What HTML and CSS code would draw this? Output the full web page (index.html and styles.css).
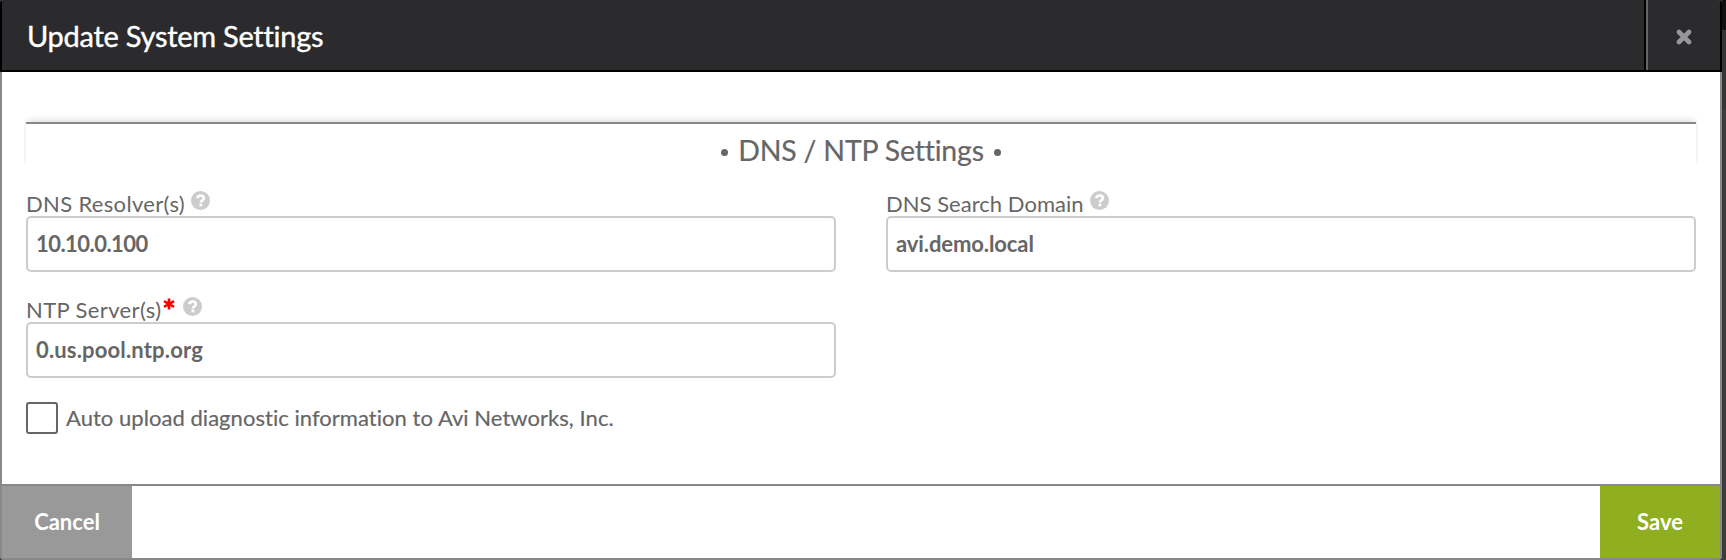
FILE: index.html
```html
<!DOCTYPE html>
<html lang="en">
<head>
<meta charset="utf-8">
<title>Update System Settings</title>
<link rel="stylesheet" href="styles.css">
</head>
<body>
<svg class="defs" width="0" height="0">
  <symbol id="help" viewBox="0 0 19 19">
    <circle cx="9.5" cy="9.5" r="9.5" fill="#ccc"/>
    <path d="M6.2 7.2C6.7 5.3 8 4.5 9.6 4.5c1.8 0 3.2 1.1 3.2 2.7 0 2.2-2.9 2.2-2.9 4.2" fill="none" stroke="#fff" stroke-width="2.7"/>
    <rect x="8.5" y="12.6" width="2.8" height="2.7" fill="#fff"/>
  </symbol>
</svg>
<div class="page">
  <div class="dialog">
    <header class="header">
      <h1 class="title">Update System Settings</h1>
      <button class="close" aria-label="Close">
        <svg width="16" height="16" viewBox="0 0 16 16"><path d="M3 3l10 10M13 3L3 13" stroke="#97979b" stroke-width="4.6" stroke-linecap="round"/></svg>
      </button>
    </header>
    <main class="body">
      <div class="section"><h2 class="section-title"><span class="dot"></span><span>DNS / NTP Settings</span><span class="dot"></span></h2></div>
      <div class="fields">
        <div class="field">
          <label class="label"><span class="l-resolver">DNS Resolver(s)</span><svg class="help"><use href="#help"/></svg></label>
          <div class="input"><span class="v-ip">10.10.0.100</span></div>
        </div>
        <div class="field">
          <label class="label"><span class="l-domain">DNS Search Domain</span><svg class="help"><use href="#help"/></svg></label>
          <div class="input"><span class="v-domain">avi.demo.local</span></div>
        </div>
        <div class="field">
          <label class="label"><span class="l-ntp">NTP Server(s)</span><svg class="required" viewBox="0 0 12 12"><path d="M6 .5v11M1 3.2l10 5.6M11 3.2L1 8.8" stroke="#f00" stroke-width="2.6"/></svg><svg class="help"><use href="#help"/></svg></label>
          <div class="input"><span class="v-ntp">0.us.pool.ntp.org</span></div>
        </div>
      </div>
      <div class="check"><span class="box"></span><span class="check-text">Auto upload diagnostic information to Avi Networks, Inc.</span></div>
    </main>
    <footer class="footer">
      <button class="btn cancel">Cancel</button>
      <button class="btn save">Save</button>
    </footer>
  </div>
  <div class="backdrop"></div>
</div>
</body>
</html>
```
FILE: styles.css
```css
* { box-sizing: border-box; }
body { margin: 0; font-family: Lato, "Liberation Sans", sans-serif; font-variant-ligatures: none; color: #666; background: #3c3c3c; }
.defs { display: block; height: 0; }
.page { display: flex; width: 1726px; height: 560px; overflow: hidden; }
.dialog { width: 1722px; height: 560px; display: flex; flex-direction: column; background: #888; border-radius: 4px; overflow: hidden; }
.backdrop { width: 4px; background: linear-gradient(#111 30px, #353536 30px, #353536 110px, #3c3c3c 110px); }
.header { display: flex; justify-content: space-between; height: 72px; flex: none; background: #2b2b2d; border: solid #000; border-width: 0 2px 2px; }
.title { margin: 0; padding: 0 0 0 25px; font-size: 29px; line-height: 71px; font-weight: 400; letter-spacing: -.27px; color: #fff; -webkit-text-stroke: .4px #fff; white-space: nowrap; }
.close { width: 74px; padding: 4px 0 0; border: 0; border-left: 2px solid #666; box-shadow: -2px 0 #000; background: none; display: flex; align-items: center; justify-content: center; }
.body { flex: 1; margin: 0 2px; padding: 50px 24px 0; background: #fff; }
.section { height: 44px; border-top: 2px solid #888; box-shadow: 0 -2px 7px -1px rgba(0,0,0,.16); background: #fff; clip-path: inset(-8px -2px 0); }
.section-title { margin: 0; display: flex; justify-content: center; align-items: center; gap: 10px; font-size: 28.5px; line-height: 52px; font-weight: 400; letter-spacing: -.2px; -webkit-text-stroke: .2px #666; white-space: nowrap; }
.dot { width: 7px; height: 7px; border-radius: 50%; background: #666; margin-top: 5px; }
.fields { display: grid; grid-template-columns: 810px 810px; column-gap: 50px; row-gap: 14px; padding-top: 14px; }
.label { display: flex; height: 36px; font-size: 22px; line-height: 48px; white-space: nowrap; }
.l-resolver { letter-spacing: .33px; }
.l-domain { letter-spacing: .03px; }
.l-ntp { letter-spacing: .38px; }
.help { width: 19px; height: 19px; margin: 11px 0 0 6px; flex: none; }
.required { width: 12px; height: 12px; margin: 12px 0 0 1px; }
.required + .help { margin-left: 8px; }
.input { height: 56px; border: 2px solid #ccc; border-radius: 5px; padding-left: 8px; font-size: 22px; line-height: 52px; font-weight: 700; white-space: nowrap; }
.v-ip { letter-spacing: -.55px; }
.v-domain { letter-spacing: -.1px; }
.v-ntp { letter-spacing: .16px; }
.check { display: flex; align-items: center; gap: 8px; margin-top: 24px; }
.box { width: 32px; height: 32px; border: 2px solid #666; border-radius: 3px; }
.check-text { font-size: 22px; line-height: 32px; letter-spacing: .04px; -webkit-text-stroke: .2px #666; white-space: nowrap; }
.footer { display: flex; justify-content: space-between; height: 76px; flex: none; background: #fff; border: 2px solid #888; border-radius: 0 0 4px 4px; }
.btn { border: 0; padding: 0; font: 700 22px/72px Lato, sans-serif; color: #fff; }
.cancel { width: 130px; background: #999; }
.save { width: 120px; background: #8fae20; }
```
